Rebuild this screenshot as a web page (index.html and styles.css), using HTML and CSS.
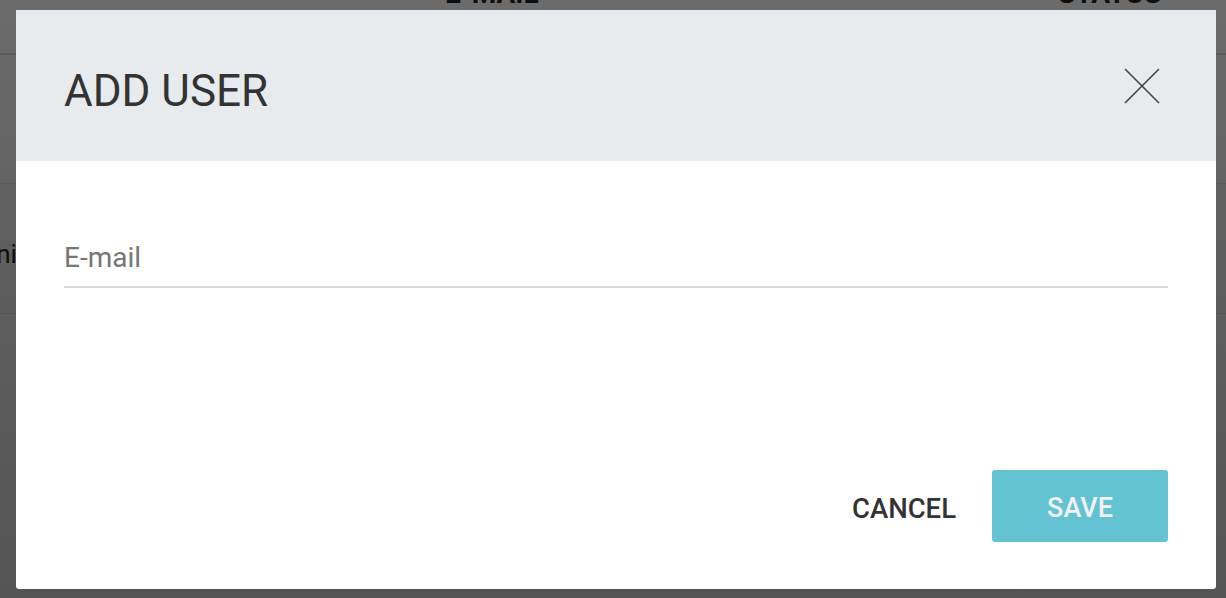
FILE: index.html
```html
<!DOCTYPE html>
<html lang="en">
<head>
<meta charset="utf-8">
<title>Add user</title>
<link rel="stylesheet" href="styles.css">
</head>
<body>
<div class="page">
  <div class="table-head">
    <span class="th th-email">E-MAIL</span>
    <span class="th th-status">STATUS</span>
  </div>
  <div class="table-gap"></div>
  <div class="table-row"><span class="cell">Dani</span></div>
  <div class="table-rest"></div>
</div>
<div class="overlay"></div>
<div class="modal" role="dialog" aria-labelledby="modal-title">
  <div class="modal-header">
    <h1 class="modal-title" id="modal-title">ADD USER</h1>
    <button class="close-btn" aria-label="Close">
      <svg width="36" height="36" viewBox="0 0 36 36"><path d="M1 1 L35 35 M35 1 L1 35" stroke="#444" stroke-width="1.6" fill="none"/></svg>
    </button>
  </div>
  <div class="modal-body">
    <input class="field" type="email" placeholder="E-mail">
  </div>
  <div class="modal-footer">
    <button class="btn-cancel">CANCEL</button>
    <button class="btn-save">SAVE</button>
  </div>
</div>
</body>
</html>
```
FILE: styles.css
```css
html, body {
  margin: 0;
  padding: 0;
  height: 100%;
  overflow: hidden;
}
body {
  font-family: Roboto, "Liberation Sans", sans-serif;
  background: #fff;
  position: relative;
}
.page {
  display: flex;
  flex-direction: column;
  height: 100%;
}
.table-head {
  height: 53px;
  border-bottom: 2px solid #d8d8d8;
  position: relative;
  overflow: hidden;
}
.th {
  position: absolute;
  bottom: 45px;
  font-weight: 700;
  font-size: 28px;
  letter-spacing: 0;
  color: #222;
  line-height: 1;
}
.th-email { left: 445px; }
.th-status { left: 1058px; }
.table-gap {
  height: 128px;
  border-bottom: 1px solid #e8e8e8;
}
.table-row {
  height: 129px;
  border-bottom: 1px solid #e8e8e8;
  background: #fafafa;
  display: flex;
  align-items: center;
}
.cell {
  font-size: 26px;
  color: #222;
  margin-left: -35px;
  margin-top: 10px;
}
.table-rest { flex: 1; }
.overlay {
  position: absolute;
  inset: 0;
  background: linear-gradient(180deg, rgba(0,0,0,0.58) 0%, rgba(0,0,0,0.63) 50%, rgba(0,0,0,0.67) 100%);
}
.modal {
  position: absolute;
  left: 16px;
  top: 10px;
  width: 1200px;
  height: 579px;
  background: #fff;
  border-radius: 0 0 3px 3px;
  display: flex;
  flex-direction: column;
  overflow: hidden;
}
.modal-header {
  height: 151px;
  background: #e7ebee;
  display: flex;
  align-items: center;
  justify-content: space-between;
  padding: 0 56px 0 48px;
}
.modal-title {
  margin: 10px 0 0 0;
  font-size: 44px;
  font-weight: 400;
  color: #333;
  letter-spacing: 0;
}
.close-btn {
  border: 0;
  background: none;
  padding: 0;
  width: 36px;
  height: 36px;
  margin-top: 1px;
  cursor: pointer;
}
.close-btn svg { display: block; }
.modal-body {
  padding: 80px 48px 0 48px;
  flex: 1;
}
.field {
  display: block;
  width: 100%;
  box-sizing: border-box;
  border: 0;
  border-bottom: 2px solid #dadada;
  padding: 0 0 12px 0;
  font-family: Roboto, "Liberation Sans", sans-serif;
  font-size: 28px;
  line-height: 33px;
  color: #333;
  outline: none;
  background: transparent;
}
.field::placeholder { color: #767676; }
.modal-footer {
  display: flex;
  justify-content: flex-end;
  align-items: center;
  gap: 36px;
  padding: 0 48px 47px 48px;
}
.btn-cancel {
  border: 0;
  background: none;
  padding: 4px 0 0 0;
  font-family: Roboto, "Liberation Sans", sans-serif;
  font-size: 27.5px;
  font-weight: 500;
  color: #333;
  cursor: pointer;
}
.btn-save {
  border: 0;
  width: 176px;
  height: 72px;
  padding: 4px 0 0 0;
  border-radius: 3px;
  background: #63c3d2;
  color: #f2f2f2;
  font-family: Roboto, "Liberation Sans", sans-serif;
  font-size: 27px;
  font-weight: 500;
  cursor: pointer;
}
```
